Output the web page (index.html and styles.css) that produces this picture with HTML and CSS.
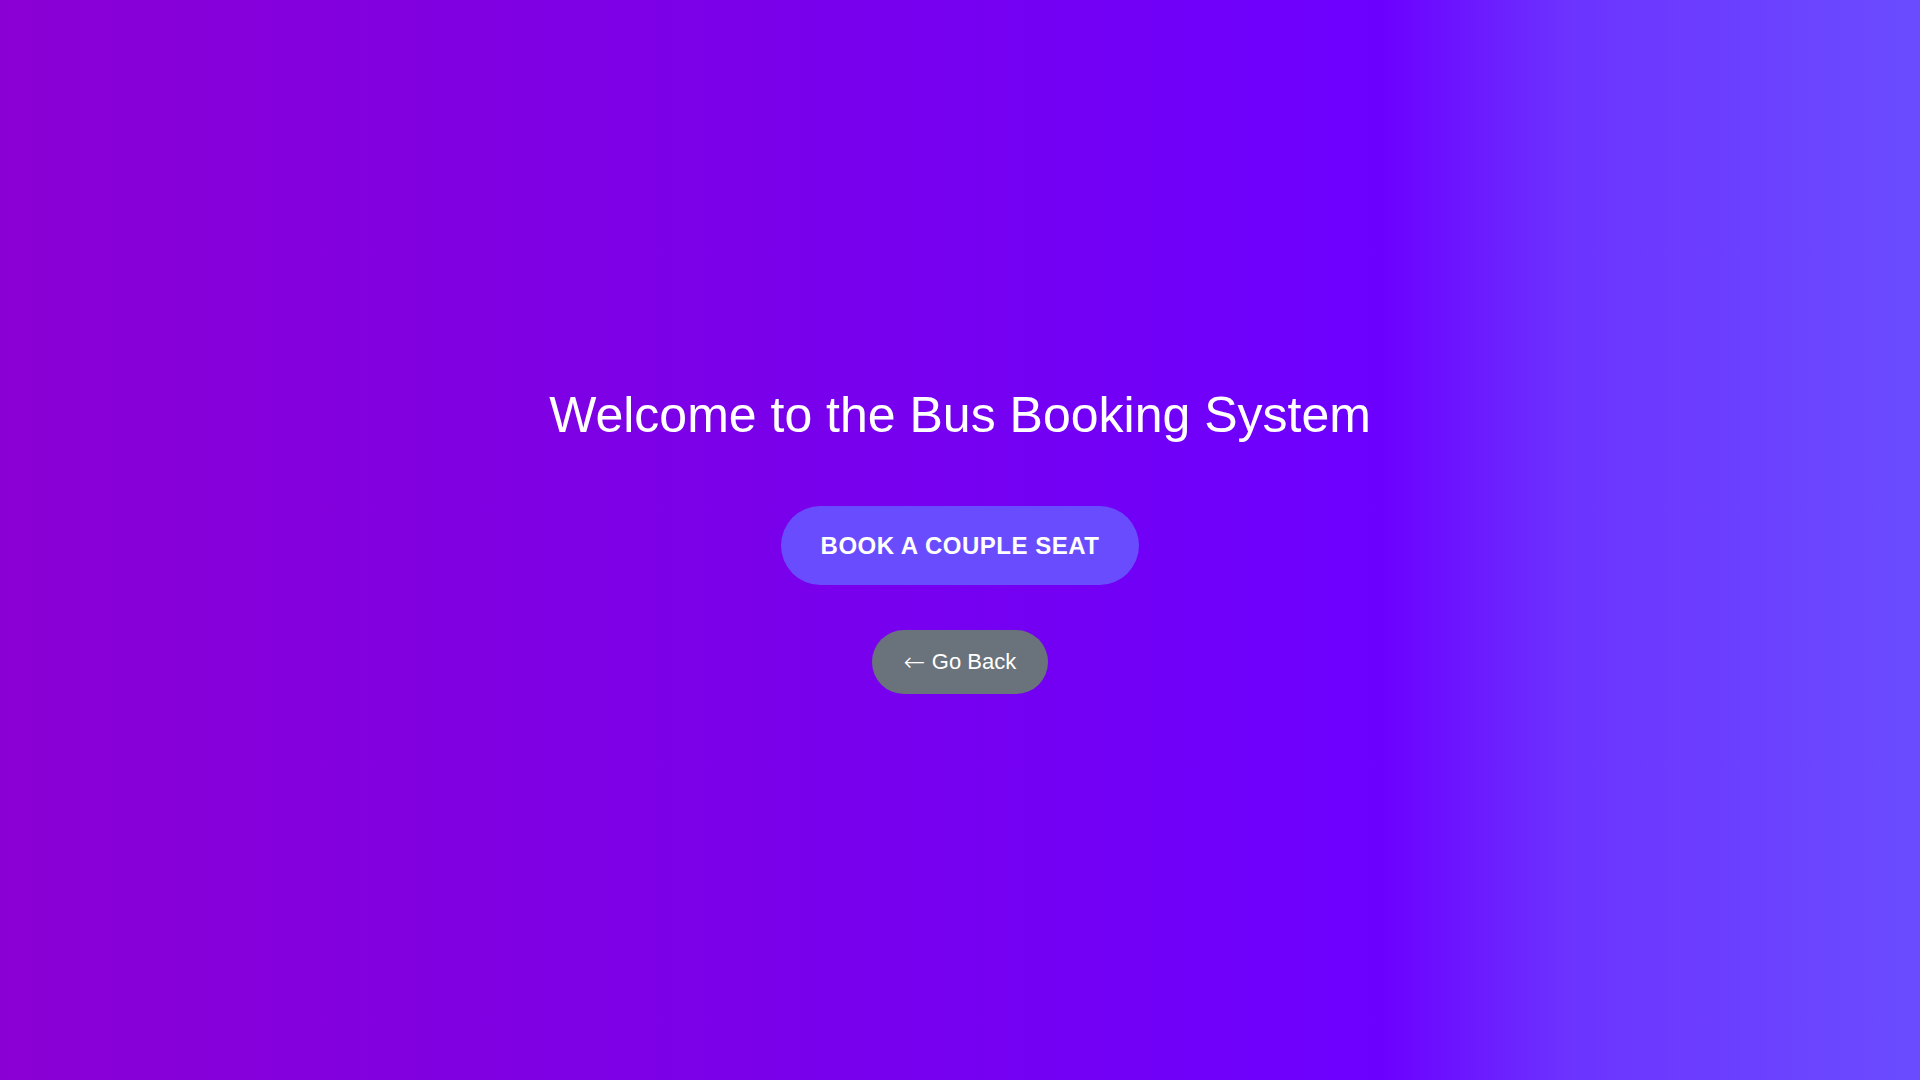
FILE: index.html
```html
<!DOCTYPE html>
<html lang="en">
<head>
<meta charset="utf-8">
<title>Bus Booking System</title>
<link rel="stylesheet" href="styles.css">
</head>
<body>
<main class="page">
  <h1 class="title">Welcome to the Bus Booking System</h1>
  <button class="btn btn-primary">BOOK A COUPLE SEAT</button>
  <button class="btn btn-back"><span class="arrow">&larr;</span> Go Back</button>
</main>
</body>
</html>
```

FILE: styles.css
```css
html, body {
  margin: 0;
  padding: 0;
  height: 100%;
}
body {
  font-family: "Liberation Sans", Arial, sans-serif;
  background: linear-gradient(90deg, #8a00d4 0%, #7a00ea 40%, #6c00ff 72%, #6c34ff 82%, #6a4cff 100%);
  color: #ffffff;
}
.page {
  min-height: 100vh;
  display: flex;
  flex-direction: column;
  align-items: center;
  justify-content: center;
}
.title {
  margin: 0 0 62px 0;
  font-size: 50px;
  font-weight: 400;
  line-height: 57px;
}
.btn {
  border: none;
  color: #ffffff;
  font-family: "Liberation Sans", Arial, sans-serif;
  cursor: pointer;
}
.btn-primary {
  background: #6a4cff;
  font-size: 24px;
  font-weight: 700;
  line-height: 27px;
  letter-spacing: 0.5px;
  padding: 26px 40px;
  border-radius: 40px;
  margin-bottom: 45px;
}
.btn-back {
  background: #6a737b;
  font-size: 22px;
  line-height: 26px;
  padding: 19px 32px;
  border-radius: 32px;
}
.arrow {
  font-family: "DejaVu Sans", sans-serif;
  font-weight: 200;
  font-size: 26px;
  line-height: 0;
  vertical-align: -2px;
}
```
